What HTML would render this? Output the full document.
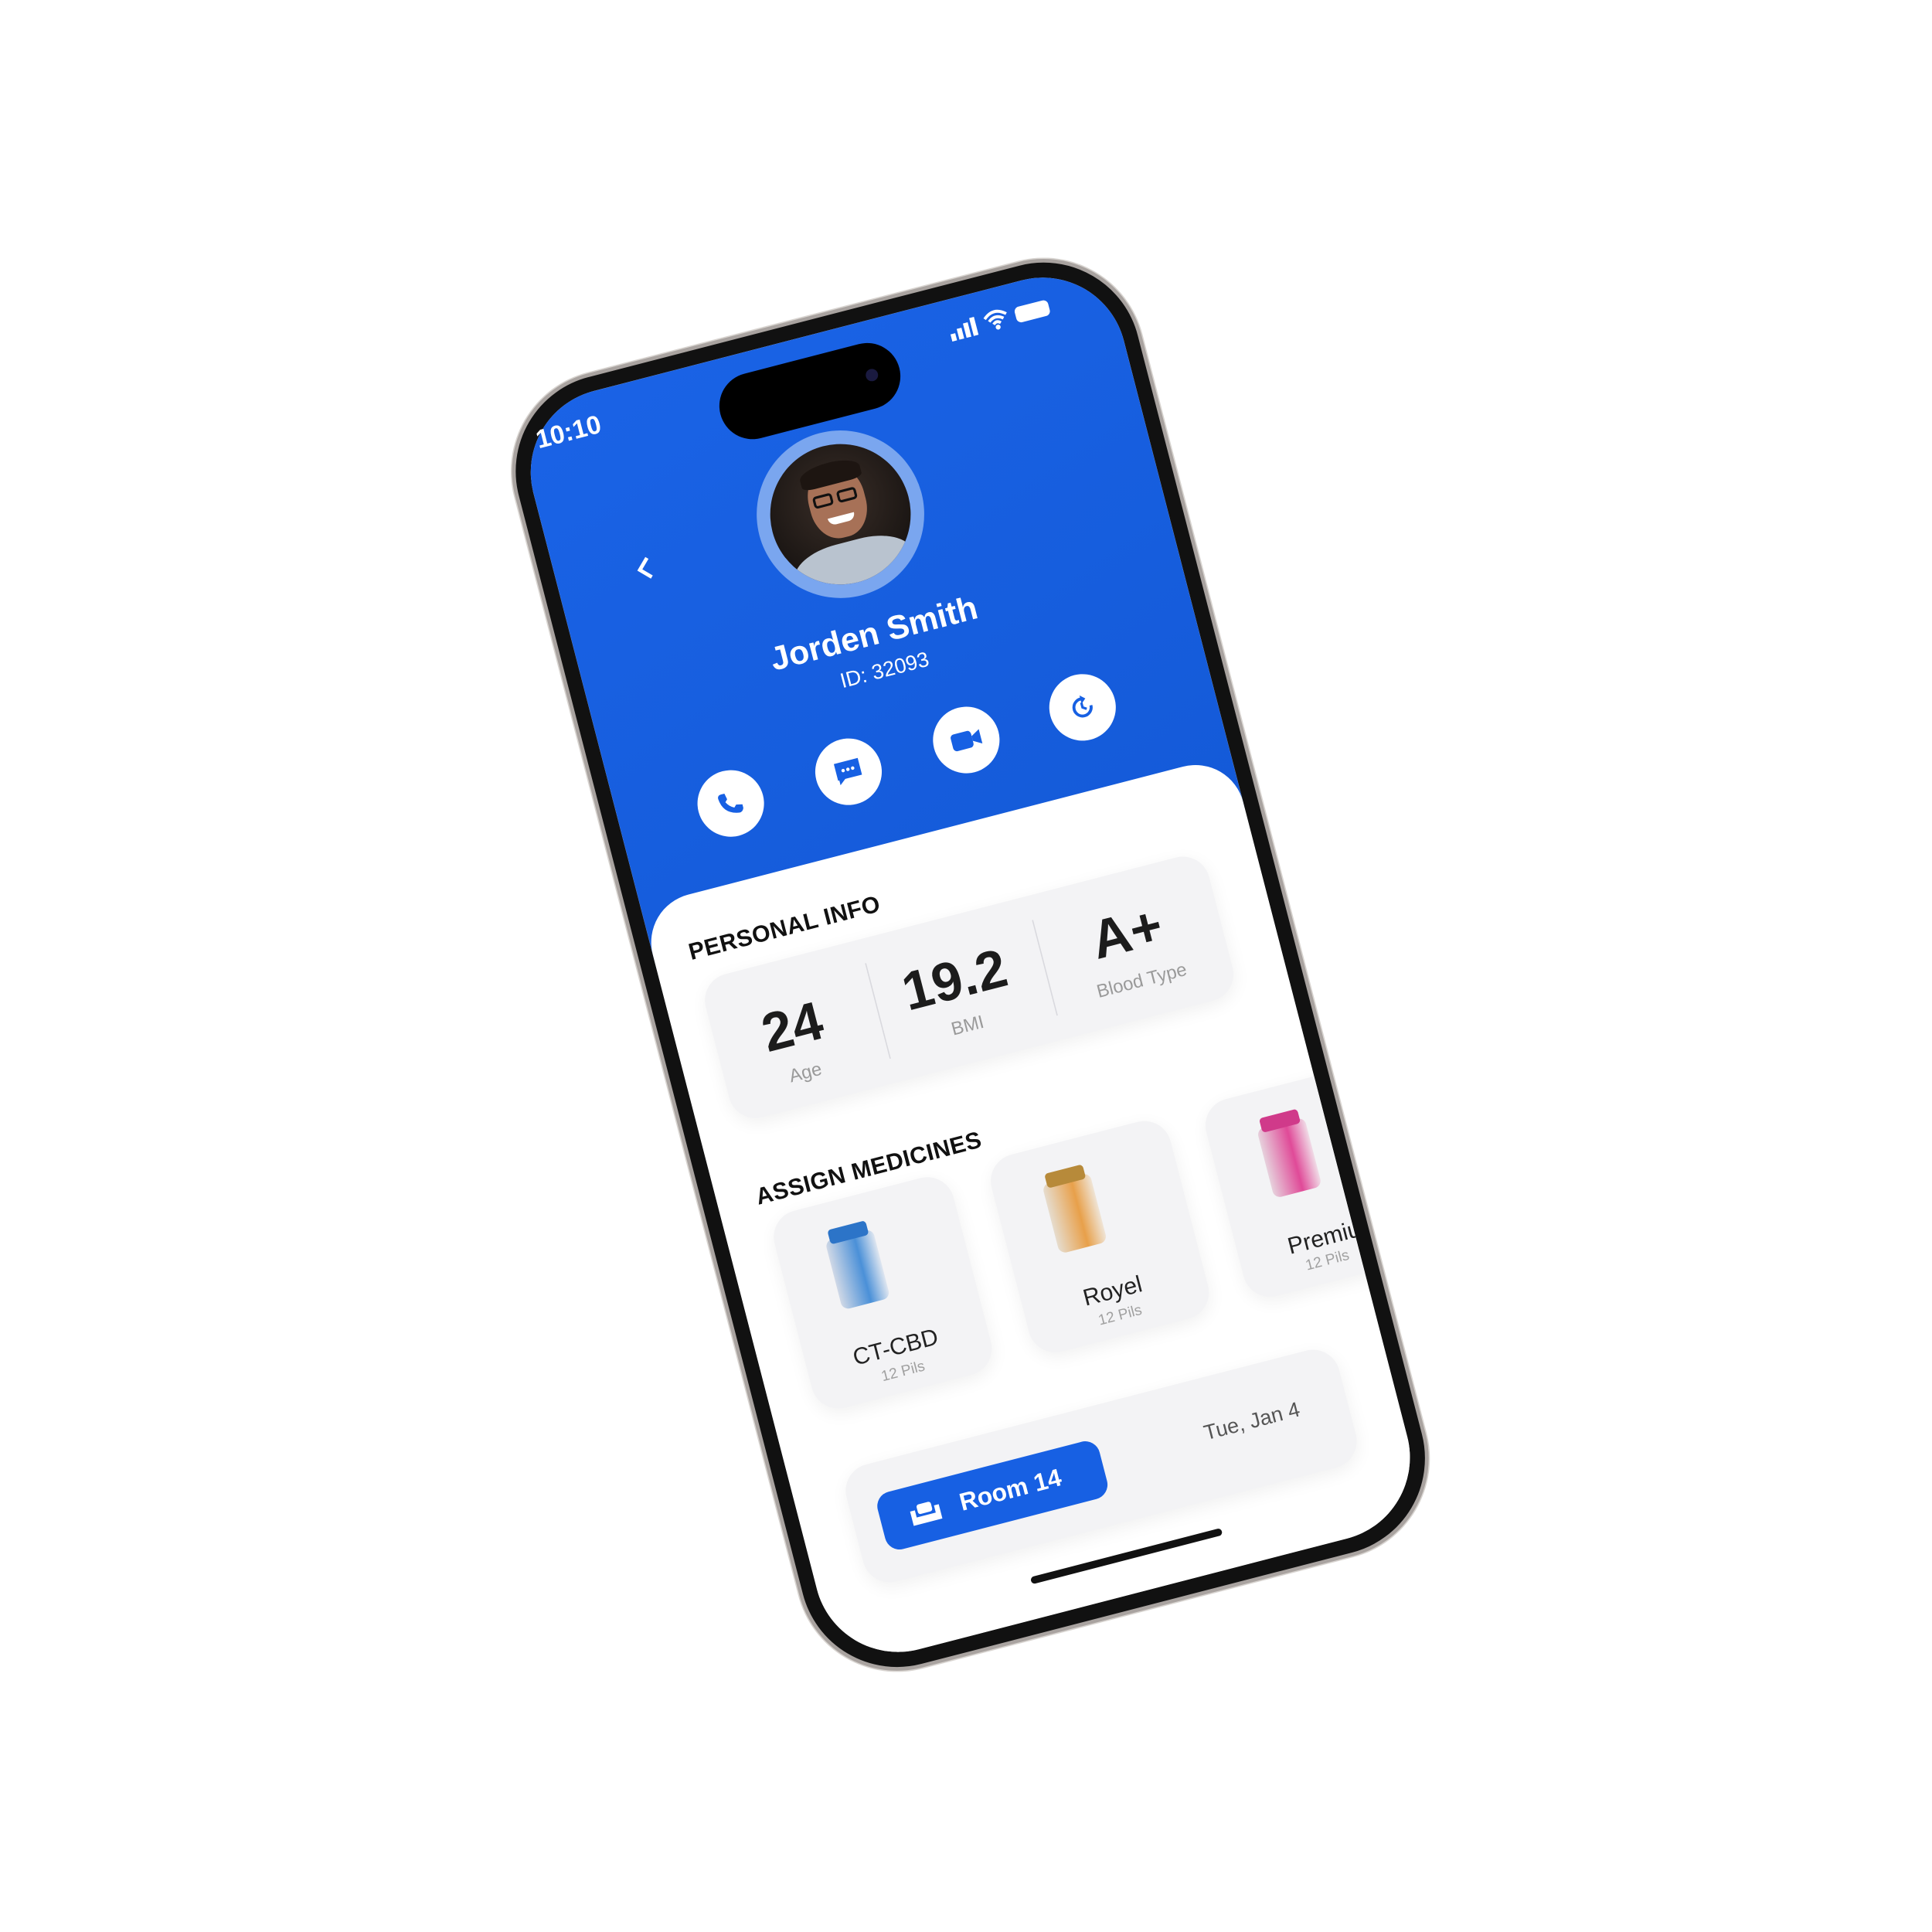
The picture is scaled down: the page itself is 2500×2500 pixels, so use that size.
<!DOCTYPE html>
<html><head><meta charset="utf-8"><style>
*{margin:0;padding:0;box-sizing:border-box}
html,body{width:2500px;height:2500px;background:#fff;overflow:hidden;font-family:"Liberation Sans",sans-serif}
#ph{position:absolute;left:0;top:0;width:525px;height:1085px;transform-origin:0 0;transform:translate(634px,516px) rotate(-14.5deg) scale(1.594)}
.frame{position:absolute;inset:0;border-radius:82px;background:#111;border:3px solid #a9a3a0;box-shadow:0 0 0 1px #d8d4d0}
.scr{position:absolute;left:15px;top:15px;right:15px;bottom:15px;border-radius:68px;overflow:hidden;background:#fff}
.blue{position:absolute;left:0;top:0;right:0;height:460px;background:linear-gradient(160deg,#1a63e6,#145ad8)}
.a{position:absolute}
.w{color:#fff}
.btn{position:absolute;width:54px;height:54px;border-radius:50%;background:#fff;margin:-27px 0 0 -27px;display:flex;align-items:center;justify-content:center}
.card{position:absolute;background:#f3f3f5;border-radius:22px;box-shadow:0 4px 14px rgba(0,0,0,.06)}
.c{transform:translate(-50%,-50%);white-space:nowrap;text-align:center}
.h{font-weight:bold;font-size:19px;color:#111;letter-spacing:.3px}
</style></head><body>
<div id="ph">
<div class="frame"></div>
<div class="scr">
 <div class="blue"></div>
 <div class="a" style="left:0;top:415px;right:0;bottom:0;background:#fff;border-radius:40px 40px 0 0"></div>
</div>
<!-- all positions in phone coords -->
<div class="a w c" style="left:55px;top:43px;font-size:21px;font-weight:bold">10:10</div>
<div class="a" style="left:178px;top:32px;width:150px;height:54px;border-radius:27px;background:#000"></div>
<div class="a" style="left:300px;top:54px;width:10px;height:10px;border-radius:50%;background:#1a1a40"></div>
<svg class="a" style="left:375px;top:30px" width="90" height="22" viewBox="0 0 90 22">
<rect x="0" y="13" width="4" height="6" fill="#fff"/><rect x="6" y="10" width="4" height="9" fill="#fff"/><rect x="12" y="7" width="4" height="12" fill="#fff"/><rect x="18" y="4" width="4" height="15" fill="#fff"/>
<path d="M30 8 Q39 0 48 8 M33 11 Q39 6 45 11 M36 14 Q39 11 42 14" stroke="#fff" stroke-width="2.4" fill="none"/><circle cx="39" cy="17" r="2" fill="#fff"/>
<rect x="55" y="5" width="28" height="13" rx="4" fill="#fff"/></svg>
<svg class="a" style="left:78px;top:154px" width="18" height="22"><path d="M13 3 L5 11 L13 19" stroke="#fff" stroke-width="3" fill="none"/></svg>
<div class="a" style="left:184px;top:94px;width:136px;height:136px;border-radius:50%;background:#7aa6ef"></div>
<div class="a" style="left:195px;top:105px;width:114px;height:114px;border-radius:50%;background:radial-gradient(circle at 50% 40%,#3a2e28,#0e0c0b);overflow:hidden">
 <div class="a" style="left:34px;top:18px;width:46px;height:58px;border-radius:45%;background:#a77157"></div>
 <div class="a" style="left:32px;top:14px;width:50px;height:18px;border-radius:50% 50% 20% 20%;background:#1d1511"></div>
 <div class="a" style="left:38px;top:38px;width:16px;height:10px;border:2px solid #111;border-radius:3px"></div>
 <div class="a" style="left:58px;top:38px;width:16px;height:10px;border:2px solid #111;border-radius:3px"></div>
 <div class="a" style="left:46px;top:58px;width:22px;height:6px;border-radius:0 0 10px 10px;background:#fff"></div>
 <div class="a" style="left:8px;top:80px;width:98px;height:50px;border-radius:40% 40% 0 0;background:#b9c3cf"></div>
</div>
<div class="a w c" style="left:254px;top:263px;font-size:27px;font-weight:bold">Jorden Smith</div>
<div class="a w c" style="left:255px;top:294px;font-size:17px">ID: 32093</div>
<div class="btn" style="left:107px;top:367px"><svg width="24" height="24" viewBox="0 0 24 24"><path d="M6 3 L9 3 L10 8 L8 10 Q10 14 14 16 L16 14 L21 15 L21 18 Q20 21 17 21 Q4 19 3 6 Q3 3 6 3Z" fill="#1760e3"/></svg></div>
<div class="btn" style="left:206px;top:366px"><svg width="26" height="26" viewBox="0 0 26 26"><path d="M3 4 H23 V18 H9 L4 22 V18 H3Z" fill="#1760e3"/><circle cx="9" cy="11" r="1.4" fill="#fff"/><circle cx="13" cy="11" r="1.4" fill="#fff"/><circle cx="17" cy="11" r="1.4" fill="#fff"/></svg></div>
<div class="btn" style="left:305px;top:365px"><svg width="28" height="24" viewBox="0 0 28 24"><rect x="2" y="5" width="17" height="14" rx="3" fill="#1760e3"/><path d="M19 10 L26 6 V18 L19 14Z" fill="#1760e3"/></svg></div>
<div class="btn" style="left:403px;top:363px"><svg width="24" height="24" viewBox="0 0 24 24"><path d="M19 12 A7 7 0 1 1 14 5.3" stroke="#1760e3" stroke-width="2.4" fill="none"/><path d="M12 2 L16 5.5 L12 9Z" fill="#1760e3"/><path d="M12 8 V12 L15 14" stroke="#1760e3" stroke-width="2" fill="none"/></svg></div>

<div class="a h" style="left:44px;top:466px">PERSONAL INFO</div>
<div class="card" style="left:46px;top:500px;width:422px;height:120px"></div>
<div class="a" style="left:180px;top:520px;width:1px;height:80px;background:#d9d9de"></div>
<div class="a" style="left:320px;top:520px;width:1px;height:80px;background:#d9d9de"></div>
<div class="a c" style="left:110px;top:556px;font-size:44px;font-weight:bold;color:#1c1c1c">24</div>
<div class="a c" style="left:111px;top:594px;font-size:15px;color:#9a9a9a">Age</div>
<div class="a c" style="left:247px;top:552px;font-size:44px;font-weight:bold;color:#1c1c1c">19.2</div>
<div class="a c" style="left:248px;top:590px;font-size:15px;color:#9a9a9a">BMI</div>
<div class="a c" style="left:392px;top:550px;font-size:44px;font-weight:bold;color:#1c1c1c">A+</div>
<div class="a c" style="left:394px;top:590px;font-size:15px;color:#9a9a9a">Blood Type</div>

<div class="a h" style="left:47px;top:672px">ASSIGN MEDICINES</div>
<div class="a" style="left:15px;top:690px;width:495px;height:190px;overflow:hidden">
 <div class="card" style="left:37px;top:10px;width:150px;height:165px"></div>
 <div class="card" style="left:219px;top:10px;width:150px;height:165px"></div>
 <div class="card" style="left:399px;top:10px;width:150px;height:165px"></div>
 <div class="a" style="left:77px;top:40px;width:40px;height:58px;border-radius:6px;background:linear-gradient(90deg,#cfd8e6,#4a90d8 60%,#dfe6f0)"></div>
 <div class="a" style="left:81px;top:32px;width:32px;height:12px;border-radius:3px;background:#2c74c8"></div>
 <div class="a" style="left:259px;top:40px;width:40px;height:58px;border-radius:6px;background:linear-gradient(90deg,#e6dccd,#e8a04a 60%,#efe4d6)"></div>
 <div class="a" style="left:263px;top:32px;width:32px;height:12px;border-radius:3px;background:#b78a3a"></div>
 <div class="a" style="left:439px;top:40px;width:40px;height:58px;border-radius:6px;background:linear-gradient(90deg,#e6d0dc,#e04a98 60%,#f0dbe6)"></div>
 <div class="a" style="left:443px;top:32px;width:32px;height:12px;border-radius:3px;background:#d03a8a"></div>
 <div class="a c" style="left:111px;top:139px;font-size:19px;color:#222">CT-CBD</div>
 <div class="a c" style="left:112px;top:158px;font-size:12px;color:#a0a0a0">12 Pils</div>
 <div class="a c" style="left:293px;top:139px;font-size:19px;color:#222">Royel</div>
 <div class="a c" style="left:294px;top:158px;font-size:12px;color:#a0a0a0">12 Pils</div>
 <div class="a" style="left:440px;top:129px;font-size:19px;color:#222">Premium</div>
 <div class="a" style="left:450px;top:150px;font-size:12px;color:#a0a0a0">12 Pils</div>
</div>

<div class="card" style="left:57px;top:914px;width:413px;height:98px"></div>
<div class="a" style="left:79px;top:940px;width:186px;height:48px;border-radius:12px;background:#1760e3;display:flex;align-items:center;padding-left:22px;gap:14px;color:#fff;font-weight:bold;font-size:20px">
<svg width="30" height="24" viewBox="0 0 30 24"><path d="M3 8 V20 H27 V8 H23 V14 H7 V8Z" fill="#fff"/><rect x="9" y="4" width="12" height="8" rx="2" fill="#fff"/></svg>Room 14</div>
<div class="a c" style="left:391px;top:959px;font-size:17px;color:#555">Tue, Jan 4</div>
<div class="a" style="left:185px;top:1036px;width:160px;height:6px;border-radius:3px;background:#111"></div>
</div>
</body></html>
